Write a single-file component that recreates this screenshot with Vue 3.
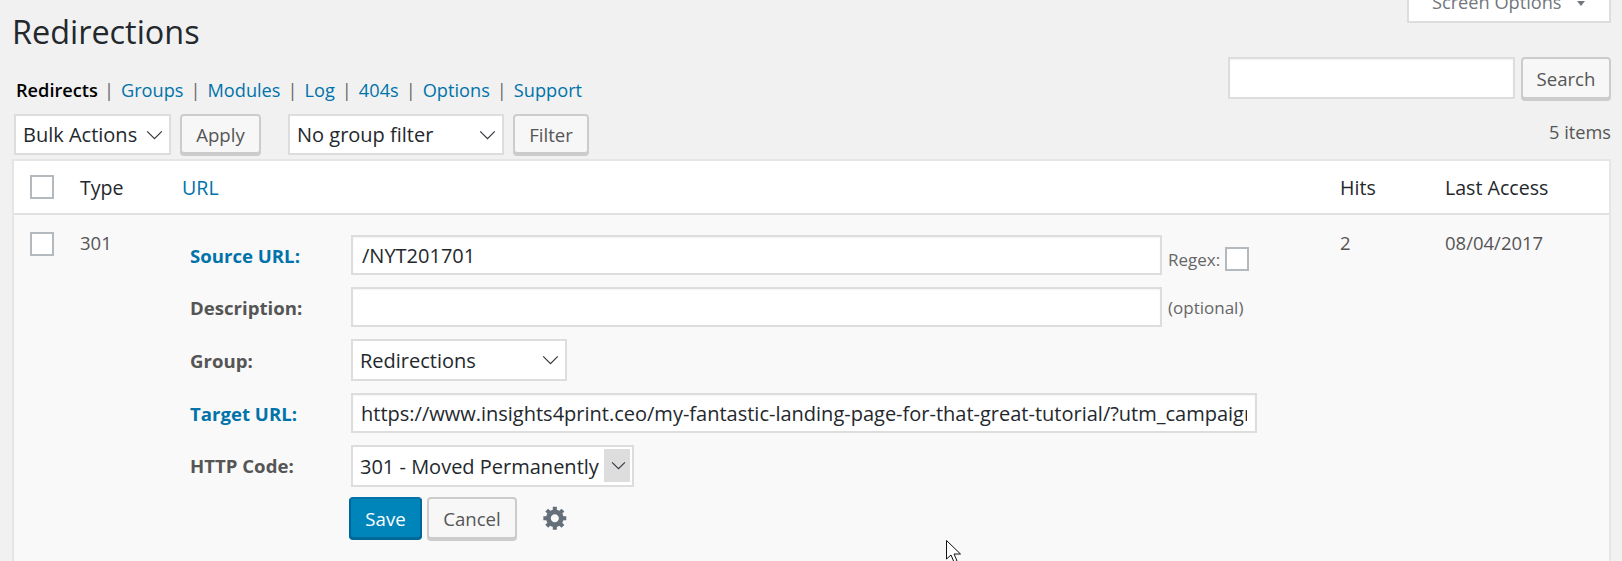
<script setup>
const tabs = ['Groups', 'Modules', 'Log', '404s', 'Options', 'Support']
const target = 'https://www.insights4print.ceo/my-fantastic-landing-page-for-that-great-tutorial/?utm_campaign=tutorial'
</script>

<template>
  <div class="page">
    <header class="head">
      <div class="head-left">
        <h1 class="title">Redirections</h1>
        <nav class="tabs">
          <strong class="current">Redirects</strong>
          <template v-for="t in tabs" :key="t">
            <span class="sep">|</span><a class="tab">{{ t }}</a>
          </template>
        </nav>
      </div>
      <div class="head-right">
        <div class="screen-opts"><span>Screen Options</span><i class="tri"></i></div>
        <div class="search">
          <input class="field search-input" type="text" />
          <button class="btn search-btn">Search</button>
        </div>
      </div>
    </header>

    <div class="tablenav">
      <div class="sel-wrap bulk">
        <select class="field sel"><option>Bulk Actions</option></select>
        <svg class="chev" viewBox="0 0 14 8"><path d="M1 1l6 6 6-6" /></svg>
      </div>
      <button class="btn apply">Apply</button>
      <div class="sel-wrap groupf">
        <select class="field sel"><option>No group filter</option></select>
        <svg class="chev" viewBox="0 0 14 8"><path d="M1 1l6 6 6-6" /></svg>
      </div>
      <button class="btn filter">Filter</button>
      <span class="count">5 items</span>
    </div>

    <section class="table">
      <div class="row thead">
        <div class="cell-check"><span class="check"></span></div>
        <div>Type</div>
        <div><a class="tab">URL</a></div>
        <div>Hits</div>
        <div>Last Access</div>
      </div>
      <div class="row tbody">
        <div class="cell-check"><span class="check"></span></div>
        <div class="plain">301</div>
        <form class="form" @submit.prevent>
          <label class="lab blue">Source URL:</label>
          <div class="ctl">
            <input class="field url" type="text" value="/NYT201701" />
            <span class="note regex">Regex: <span class="check"></span></span>
          </div>
          <label class="lab">Description:</label>
          <div class="ctl">
            <input class="field url" type="text" />
            <span class="note">(optional)</span>
          </div>
          <label class="lab">Group:</label>
          <div class="ctl">
            <div class="sel-wrap group">
              <select class="field sel"><option>Redirections</option></select>
              <svg class="chev" viewBox="0 0 14 8"><path d="M1 1l6 6 6-6" /></svg>
            </div>
          </div>
          <label class="lab blue">Target URL:</label>
          <div class="ctl">
            <input class="field target" type="text" :value="target" />
          </div>
          <label class="lab code">HTTP Code:</label>
          <div class="ctl code">
            <div class="sel-wrap http">
              <select class="field sel"><option>301 - Moved Permanently</option></select>
              <span class="arrow-box"></span>
              <svg class="chev" viewBox="0 0 14 8"><path d="M1 1l6 6 6-6" /></svg>
            </div>
          </div>
          <div class="actions">
            <button class="btn save">Save</button>
            <button class="btn cancel">Cancel</button>
            <svg class="gear" viewBox="0 0 20 20"><path d="M18 12h-2.180c-.17.7-.44 1.350-.81 1.930l1.540 1.540-2.100 2.100-1.540-1.540c-.58.36-1.230.63-1.910.79V19H8v-2.180c-.68-.16-1.330-.43-1.910-.79l-1.540 1.540-2.120-2.120 1.540-1.540c-.36-.58-.63-1.230-.79-1.910H1V9.030h2.170c.16-.7.44-1.350.8-1.940L2.430 5.550l2.100-2.100 1.540 1.540c.58-.37 1.240-.64 1.930-.81V2h3v2.180c.68.16 1.330.43 1.910.79l1.540-1.540 2.120 2.120-1.540 1.540c.36.59.64 1.240.8 1.940H18V12zm-8.500 1.500c1.660 0 3-1.340 3-3s-1.340-3-3-3-3 1.340-3 3 1.340 3 3 3z" /></svg>
          </div>
        </form>
        <div class="plain">2</div>
        <div class="plain">08/04/2017</div>
      </div>
    </section>

    <svg class="cursor" width="20" height="26" viewBox="0 0 20 26">
      <path d="M.5.5V19l4.500-4 3 7 3-1.200-3-6.800h6.500z" fill="#fff" stroke="#111" stroke-width="1" />
    </svg>
  </div>
</template>

<style>
html, body { margin: 0; height: 561px; overflow: hidden; background: #f1f1f1; }
</style>

<style scoped>
.page {
  position: relative;
  box-sizing: border-box;
  height: 561px;
  overflow: hidden;
  padding: 0 11px 0 12px;
  background: #f1f1f1;
  font-family: "Open Sans", "Noto Sans", sans-serif;
  font-size: 19.6px;
  color: #23282d;
}
.head { display: flex; justify-content: space-between; height: 114px; }
.title {
  margin: 8px 0 0 0;
  font-size: 32.4px;
  font-weight: 400;
  line-height: 46px;
}
.tabs {
  display: flex;
  align-items: baseline;
  margin: 24px 0 0 4px;
  font-size: 18.2px;
  line-height: 24px;
  white-space: nowrap;
}
.current { font-weight: 600; color: #000; margin-right: -1px; }
.sep { margin: 0 7px; color: #666; }
.tab { color: #0073aa; }
.head-right { display: flex; flex-direction: column; align-items: flex-end; }
.screen-opts {
  box-sizing: border-box;
  width: 204px;
  height: 23px;
  display: flex;
  align-items: flex-end;
  padding: 0 0 7px 23px;
  background: #fff;
  border: 2px solid #ddd;
  border-top: 0;
  color: #72777c;
  font-size: 18.2px;
  line-height: 24px;
}
.tri {
  width: 0;
  height: 0;
  margin: 0 0 8px 15px;
  border: 4px solid transparent;
  border-top: 5px solid #72777c;
  border-bottom: 0;
}
.search { display: flex; gap: 6px; margin-top: 34px; }
.field {
  box-sizing: border-box;
  border: 2px solid #ddd;
  background: #fff;
  font: inherit;
  font-size: 20px;
  color: #23282d;
  outline: none;
  border-radius: 0;
  box-shadow: inset 0 1px 2px rgba(0, 0, 0, 0.05);
}
.search-input { width: 287px; height: 42px; }
.btn {
  box-sizing: border-box;
  font: inherit;
  font-size: 18.6px;
  height: 42px;
  padding: 0;
  color: #555;
  background: #f7f7f7;
  border: 2px solid #ccc;
  border-radius: 4px;
  box-shadow: 0 2px 0 #ccc;
}
.search-btn { width: 90px; }
.tablenav { display: flex; align-items: flex-start; height: 45px; padding-left: 2px; }
.sel-wrap { position: relative; }
.sel {
  appearance: none;
  display: block;
  width: 100%;
  height: 100%;
  padding: 0 0 0 7px;
  box-shadow: none;
}
.chev {
  position: absolute;
  right: 8px;
  top: 50%;
  width: 17px;
  height: 10px;
  margin-top: -5px;
  fill: none;
  stroke: #32373c;
  stroke-width: 1;
  pointer-events: none;
}
.bulk { width: 157px; height: 41px; }
.apply { width: 81px; margin-left: 9px; height: 40px; }
.groupf { width: 216px; height: 41px; margin-left: 27px; }
.filter { width: 76px; margin-left: 9px; height: 40px; }
.count { margin-left: auto; margin-top: 6px; font-size: 18.2px; color: #555; }
.table {
  box-sizing: border-box;
  height: 420px;
  border: 2px solid #e5e5e5;
  border-bottom: 0;
  background: #f9f9f9;
}
.row { display: grid; grid-template-columns: 66px 102px 1fr 105px 164px; }
.thead {
  height: 54px;
  align-items: center;
  padding-top: 1px;
  background: #fff;
  border-bottom: 2px solid #e1e1e1;
  box-sizing: border-box;
}
.thead .cell-check { margin-top: -1px; }
.cell-check { padding-left: 16px; display: flex; }
.check {
  display: inline-block;
  box-sizing: border-box;
  width: 24px;
  height: 24px;
  background: #fff;
  border: 2px solid #b4b9be;
}
.tbody { padding-top: 17px; }
.plain { color: #555; font-size: 18.5px; line-height: 22px; }
.form {
  display: grid;
  grid-template-columns: 161px 1fr;
  row-gap: 12px;
  padding: 3px 0 0 8px;
  align-items: center;
}
.lab { font-weight: 700; color: #555; font-size: 18.6px; line-height: 24px; padding-top: 2px; }
.lab.blue { color: #0073aa; }
.ctl { display: flex; align-items: center; }
.url { width: 811px; height: 40px; padding: 0 9px; }
.target { width: 906px; height: 40px; padding: 0 8px 0 8px; }
.note { margin-left: 6px; font-size: 17px; color: #666; }
.regex { display: flex; align-items: center; gap: 5px; margin-top: 8px; }
.group { width: 216px; height: 42px; }
.http { width: 283px; height: 42px; }
.arrow-box {
  position: absolute;
  top: 4px;
  right: 4px;
  width: 26px;
  height: 33px;
  background: #ddd;
}
.http .chev { right: 8px; width: 15px; height: 9px; }
.ctl.code { margin-bottom: -2px; }
.actions {
  grid-column: 2;
  display: flex;
  align-items: flex-start;
  height: 44px;
  margin-left: -2px;
}
.save {
  width: 73px;
  height: 42px;
  background: #0085ba;
  border-color: #0073aa #006799 #006799;
  color: #fff;
  box-shadow: 0 1px 0 #006799;
}
.cancel { width: 90px; height: 42px; margin-left: 5px; }
.gear { width: 27px; height: 27px; margin: 7px 0 0 25px; fill: #646f7a; }
.cursor { position: absolute; left: 946px; top: 540px; }
</style>
